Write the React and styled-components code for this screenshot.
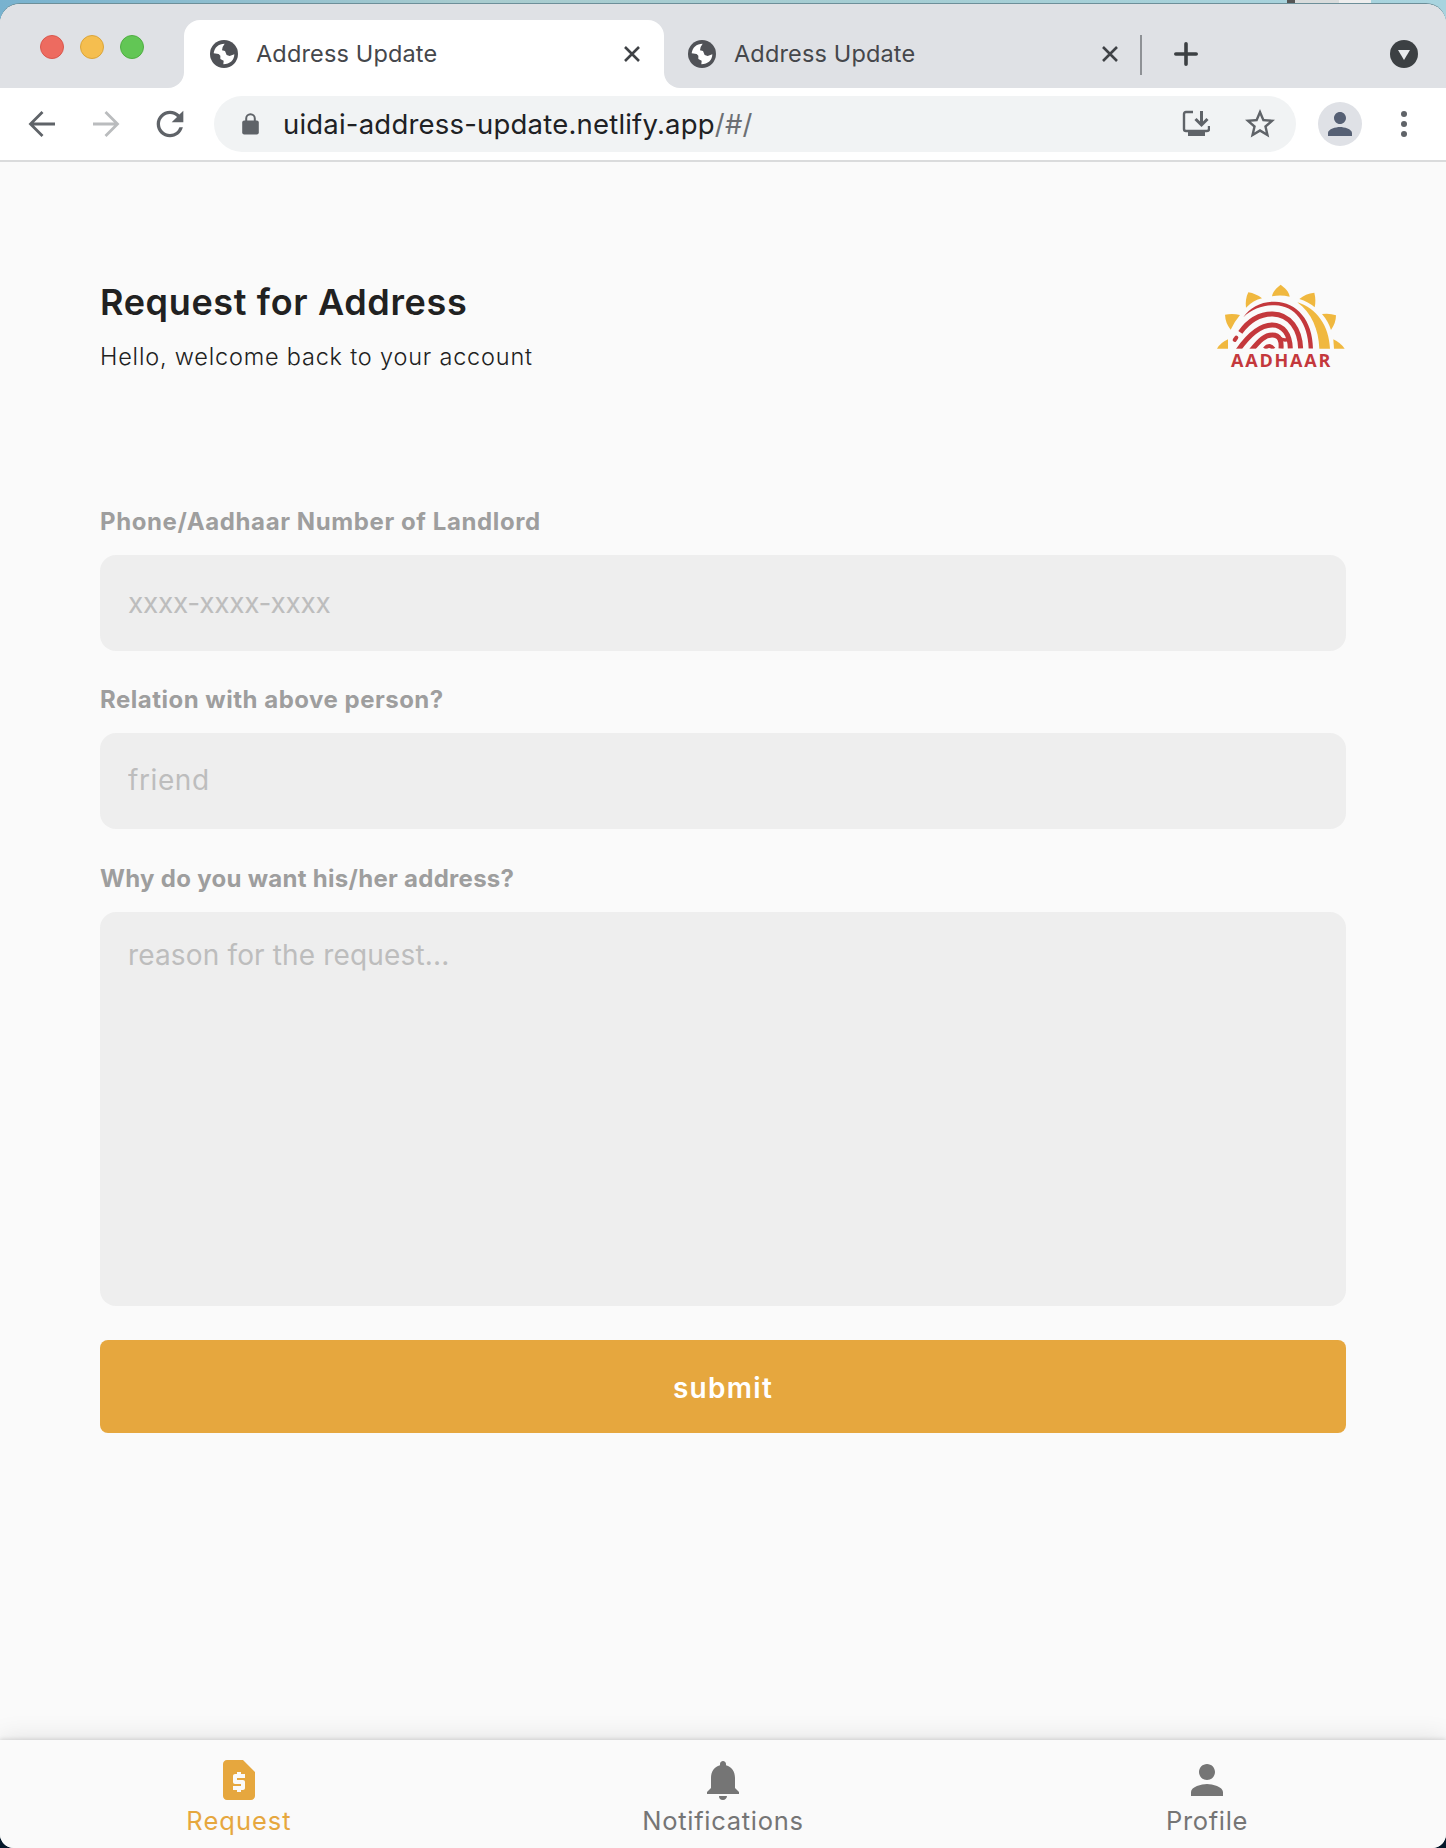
import React from "react";
import styled, { createGlobalStyle } from "styled-components";
import { MdRequestPage, MdNotifications, MdPerson, MdStarOutline, MdRefresh } from "react-icons/md";

const Global = createGlobalStyle`
  * { box-sizing: border-box; }
  body { margin: 0; font-family: Inter, "Open Sans", sans-serif; }
`;

const Desktop = styled.div`
  width: 1446px;
  height: 1848px;
  padding-top: 4px;
  overflow: hidden;
  background:
    linear-gradient(90deg, #555 0 8px, #d9dcdc 8px 52px, #eee 52px 84px) 1287px 0 / 84px 4px no-repeat,
    linear-gradient(90deg, #78b2cf 0%, #a9cccf 33%, #a5cdd3 60%, #a8d4df 100%) 0 0 / 100% 40px no-repeat,
    #05182a;
`;

const Window = styled.div`
  display: flex;
  flex-direction: column;
  height: 1844px;
  border-radius: 20px 20px 14px 14px;
  overflow: hidden;
  background: #fafafa;
  box-shadow: 0 -1px 0 #6d8f99;
`;

const TabStrip = styled.div`
  display: flex;
  height: 84px;
  flex: none;
  background: linear-gradient(#dfe1e5 50%, #fff 50%);
`;

const WindowControls = styled.div`
  display: flex;
  align-items: center;
  gap: 16px;
  width: 184px;
  padding: 2px 0 0 40px;
  background: #dfe1e5;
  border-bottom-right-radius: 16px;
`;

const Light = styled.span`
  width: 24px;
  height: 24px;
  border-radius: 50%;
  background: ${(p) => p.$color};
  border: 1px solid ${(p) => p.$edge};
`;

const ActiveTab = styled.div`
  display: flex;
  align-items: center;
  width: 480px;
  height: 68px;
  margin-top: 16px;
  padding: 0 23px 0 26px;
  background: #fff;
  border-radius: 16px 16px 0 0;
`;

const StripRest = styled.div`
  display: flex;
  align-items: center;
  flex: 1;
  padding: 16px 28px 0 24px;
  background: #dfe1e5;
  border-bottom-left-radius: 16px;
`;

const TabTitle = styled.span`
  margin-left: 18px;
  font-size: 23.5px;
  line-height: 30px;
  letter-spacing: 0.15px;
  color: #45474b;
  flex: ${(p) => (p.$fixed ? "0 0 367px" : 1)};
`;

const TabDivider = styled.span`
  width: 2px;
  height: 40px;
  margin: 2px 32px 0 21px;
  background: #8e9195;
`;

const Spacer = styled.span`
  flex: 1;
`;

const Toolbar = styled.div`
  display: flex;
  align-items: center;
  flex: none;
  height: 74px;
  padding: 0 29px 0 28px;
  background: #fff;
  border-bottom: 2px solid #dadbdc;
`;

const NavButtons = styled.div`
  display: flex;
  align-items: center;
  width: 186px;
  gap: 36px;
  color: #5f6368;
`;

const ReloadIcon = styled(MdRefresh)`
  margin-left: -6px;
`;

const AddressBar = styled.div`
  display: flex;
  align-items: center;
  width: 1082px;
  height: 56px;
  padding: 0 18px 0 28px;
  border-radius: 28px;
  background: #f1f3f4;
  color: #5f6368;
`;

const StarIcon = styled(MdStarOutline)`
  margin-left: 32px;
`;

const Url = styled.span`
  flex: 1;
  margin-left: 24px;
  font-size: 27.5px;
  line-height: 34px;
  letter-spacing: 0.2px;
  color: #202124;
  span { color: #6c6f73; }
`;

const Avatar = styled.div`
  display: flex;
  align-items: center;
  justify-content: center;
  width: 44px;
  height: 44px;
  margin: 0 39px 0 22px;
  border-radius: 50%;
  background: #dfe1e6;
  color: #566074;
`;

const Dots = styled.div`
  display: flex;
  flex-direction: column;
  gap: 4px;
  i { width: 6px; height: 6px; border-radius: 50%; background: #5f6368; }
`;

const Page = styled.main`
  flex: 1;
  padding: 118px 100px 0;
`;

const Header = styled.header`
  display: flex;
  justify-content: space-between;
  height: 226px;
`;

const Title = styled.h1`
  margin: 0;
  font-size: 36px;
  line-height: 44px;
  font-weight: 600;
  letter-spacing: 0.65px;
  color: #212121;
`;

const Subtitle = styled.p`
  margin: 18px 0 0;
  font-size: 23.5px;
  line-height: 30px;
  font-weight: 300;
  letter-spacing: 0.8px;
  color: #212121;
`;

const Logo = styled.svg`
  margin-top: 3px;
  overflow: visible;
`;

const Field = styled.label`
  display: flex;
  flex-direction: column;
  margin-bottom: ${(p) => p.$gap}px;
`;

const FieldLabel = styled.span`
  margin-bottom: 17px;
  font-size: 24px;
  line-height: 32px;
  font-weight: 700;
  letter-spacing: ${(p) => p.$spacing}px;
  color: #9e9e9e;
`;

const Input = styled.input`
  height: 96px;
  padding: ${(p) => (p.$raised ? "0 28px 2px" : "0 28px")};
  border: 0;
  border-radius: 16px;
  background: #eee;
  font: 400 28px/34px Inter, sans-serif;
  letter-spacing: ${(p) => p.$spacing}px;
  &::placeholder { color: #bdbdbd; opacity: 1; }
`;

const TextArea = styled(Input)`
  height: 394px;
  padding: 26px 28px;
  resize: none;
`;

const Submit = styled.button`
  display: block;
  width: 100%;
  height: 93px;
  padding: 2px 0 0;
  border: 0;
  border-radius: 8px;
  background: #e6a73e;
  color: #fff;
  font: 600 28px/34px Inter, sans-serif;
  letter-spacing: 1.3px;
`;

const BottomNav = styled.nav`
  display: grid;
  grid-template-columns: 478px 490px 478px;
  height: 108px;
  flex: none;
  background: #fafafa;
  box-shadow: 0 -1px 4px rgba(0, 0, 0, 0.12), 0 -2px 24px rgba(0, 0, 0, 0.1);
`;

const NavItem = styled.a`
  display: flex;
  flex-direction: column;
  align-items: center;
  padding-top: 16px;
  font-size: 25.5px;
  line-height: 34px;
  letter-spacing: ${(p) => p.$spacing}px;
  color: ${(p) => (p.$active ? "#e6a73e" : "#757575")};
  svg { display: block; }
`;

const Globe = () => (
  <svg width="28" height="28" viewBox="0 0 84 84">
    <circle cx="42" cy="42" r="42" fill="#505257" />
    <path fill="#fff" d="M11 40C13 23 25 11 44 11L38 21 36 31 45 33 50 45 59 48 73 43C73 60 60 73 40 73L41 62 31 57 31 47 26 42Z" />
  </svg>
);

const Cross = () => (
  <svg width="18" height="18" viewBox="0 0 18 18">
    <path d="M2 2 16 16M16 2 2 16" stroke="#3f4246" strokeWidth="2.6" />
  </svg>
);

const Arrow = ({ flip, color }) => (
  <svg width="28" height="28" viewBox="0 0 28 28">
    <path
      d="M27 14H3M14.5 2 2.5 14 14.5 26"
      fill="none"
      stroke={color}
      strokeWidth="2.8"
      transform={flip ? "translate(28 0) scale(-1 1)" : undefined}
    />
  </svg>
);

const Lock = () => (
  <svg width="17" height="22" viewBox="0 0 17 22">
    <path d="M4.2 9V5.6A4.3 4.3 0 0 1 12.8 5.6V9" fill="none" stroke="#5f6368" strokeWidth="2" />
    <rect x="0.2" y="7.5" width="16.6" height="14" rx="2" fill="#5f6368" />
  </svg>
);

const Install = () => (
  <svg width="28" height="28" viewBox="0 0 28 28">
    <path d="M11 2H4Q2 2 2 4V19Q2 21 4 21H25Q27 21 27 19V16" fill="none" stroke="#5f6368" strokeWidth="2.4" />
    <path d="M19.5 1V14M13.5 9 19.5 15 25.5 9" fill="none" stroke="#5f6368" strokeWidth="3" />
    <path d="M6 21H23V26H6Z" fill="#5f6368" />
  </svg>
);

const AadhaarLogo = () => (
  <Logo width="130" height="93.33" viewBox="48 40 390 280">
    <g fill="#f0b83f">
      <path d="M216 80C218 66 230 54 242 45C254 54 268 66 269 81Q242 74 216 80Z" />
      <path d="M145 68Q168 72 186 86Q160 92 138 114C136 98 138 82 145 68Z" />
      <path d="M343 69C347 84 347 100 344 113Q325 96 298 88C310 78 325 70 343 69Z" />
      <path d="M75 135Q98 130 120 136Q104 155 92 180Q76 160 75 135Z" />
      <path d="M366 133Q390 130 408 137Q408 160 393 181Q385 155 366 133Z" />
      <path d="M51 237Q60 220 84 209V237Z" />
      <path d="M400 209Q420 218 434 237H402Z" />
      <path d="M292 98C350 115 388 170 390 237H358C356 180 335 130 292 98Z" />
    </g>
    <path fill="#c4383c" d="M130 143C150 112 185 95 225 96C290 98 338 150 339 237H326C324 160 285 108 225 107C190 106 155 118 130 143Z" />
    <g fill="none" stroke="#c4383c" strokeWidth="15">
      <path d="M121 188C148 150 180 133 218 133C270 134 300 180 302 237" />
      <path d="M114 242C140 205 175 166 217 166C250 166 270 195 271 237" />
      <path d="M154 242C180 210 195 196 217 196C240 196 245 215 243 237" />
      <path d="M236 203Q252 216 266 208" strokeWidth="11" />
      <path d="M194 237Q208 220 221 238" strokeWidth="12" />
      <path d="M104 211 109 204" strokeWidth="12" strokeLinecap="round" />
    </g>
    <rect x="90" y="237" width="260" height="12" fill="#fafafa" />
    <text x="93" y="293" textLength="298" lengthAdjust="spacing" fontFamily="Open Sans" fontWeight="700" fontSize="54" fill="#c4383c">AADHAAR</text>
  </Logo>
);

export default function App() {
  return (
    <Desktop>
      <Global />
      <Window>
        <TabStrip>
          <WindowControls>
            <Light $color="#ed6b60" $edge="#d9574d" />
            <Light $color="#f5be4f" $edge="#dba53a" />
            <Light $color="#62c655" $edge="#4fae42" />
          </WindowControls>
          <ActiveTab>
            <Globe />
            <TabTitle>Address Update</TabTitle>
            <Cross />
          </ActiveTab>
          <StripRest>
            <Globe />
            <TabTitle $fixed>Address Update</TabTitle>
            <Cross />
            <TabDivider />
            <svg width="24" height="24" viewBox="0 0 24 24">
              <path d="M12 1.8V22.2M1.8 12H22.2" stroke="#3c4043" strokeWidth="3.6" strokeLinecap="round" />
            </svg>
            <Spacer />
            <svg width="28" height="28" viewBox="0 0 28 28">
              <circle cx="14" cy="14" r="14" fill="#3c4043" />
              <path d="M8 10H20L14 20Z" fill="#e8eaed" />
            </svg>
          </StripRest>
        </TabStrip>
        <Toolbar>
          <NavButtons>
            <Arrow color="#5f6368" />
            <Arrow color="#babcbe" flip />
            <ReloadIcon size={40} />
          </NavButtons>
          <AddressBar>
            <Lock />
            <Url>uidai-address-update.netlify.app<span>/#/</span></Url>
            <Install />
            <StarIcon size={36} />
          </AddressBar>
          <Avatar><MdPerson size={36} /></Avatar>
          <Dots><i /><i /><i /></Dots>
        </Toolbar>
        <Page>
          <Header>
            <div>
              <Title>Request for Address</Title>
              <Subtitle>Hello, welcome back to your account</Subtitle>
            </div>
            <AadhaarLogo />
          </Header>
          <form>
            <Field $gap={33}>
              <FieldLabel $spacing={0.6}>Phone/Aadhaar Number of Landlord</FieldLabel>
              <Input placeholder="xxxx-xxxx-xxxx" $spacing={-0.3} />
            </Field>
            <Field $gap={34}>
              <FieldLabel $spacing={0.5}>Relation with above person?</FieldLabel>
              <Input placeholder="friend" $spacing={0.6} $raised />
            </Field>
            <Field $gap={34}>
              <FieldLabel $spacing={0.29}>Why do you want his/her address?</FieldLabel>
              <TextArea as="textarea" placeholder="reason for the request..." $spacing={0.15} />
            </Field>
            <Submit type="button">submit</Submit>
          </form>
        </Page>
        <BottomNav>
          <NavItem $active $spacing={1}><MdRequestPage size={48} />Request</NavItem>
          <NavItem $spacing={0.72}><MdNotifications size={48} />Notifications</NavItem>
          <NavItem $spacing={0.67}><MdPerson size={48} />Profile</NavItem>
        </BottomNav>
      </Window>
    </Desktop>
  );
}
